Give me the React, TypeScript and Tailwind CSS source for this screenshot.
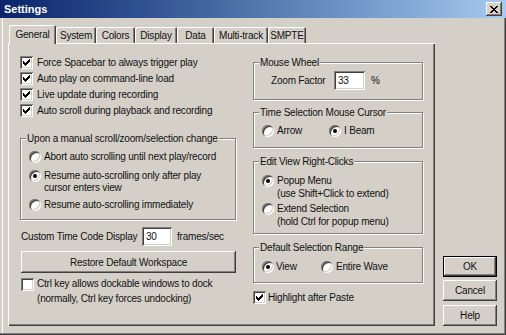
import React from "react";

const raised =
  "shadow-[inset_-1px_-1px_0_#404040,inset_1px_1px_0_#fff,inset_-2px_-2px_0_#808080]";
const sunken =
  "shadow-[inset_1px_1px_0_#808080,inset_-1px_-1px_0_#fff,inset_2px_2px_0_#404040,inset_-2px_-2px_0_#d4d0c8]";

function Check({ checked }: { checked?: boolean }) {
  return (
    <span
      className={`w-[13px] h-[13px] bg-white shrink-0 flex items-center justify-center ${sunken}`}
    >
      {checked && (
        <svg width="7" height="7" viewBox="0 0 7 7" shapeRendering="crispEdges">
          <path
            d="M0.5 2.5 L2.5 4.5 L6.5 0.5 M0.5 3.5 L2.5 5.5 L6.5 1.5 M0.5 4.5 L2.5 6.5 L6.5 2.5"
            stroke="#000"
            fill="none"
            strokeWidth="1"
          />
        </svg>
      )}
    </span>
  );
}

function Radio({ on }: { on?: boolean }) {
  return (
    <span
      className={`w-[12px] h-[12px] rounded-full bg-white shrink-0 flex items-center justify-center ${sunken}`}
    >
      {on && <span className="w-[4px] h-[4px] rounded-full bg-black" />}
    </span>
  );
}

function Group({
  title,
  className,
  children,
}: {
  title: string;
  className: string;
  children: React.ReactNode;
}) {
  return (
    <div
      className={`relative border border-[#808080] shadow-[inset_1px_1px_0_#fff,1px_1px_0_#fff] ${className}`}
    >
      <span className="absolute -top-[7px] left-[5px] px-[1px] bg-[#d4d0c8] leading-[13px] whitespace-nowrap">
        {title}
      </span>
      {children}
    </div>
  );
}

const tabs = [
  { label: "General", w: "w-[47px]" },
  { label: "System", w: "w-[40px]" },
  { label: "Colors", w: "w-[39px]" },
  { label: "Display", w: "w-[42px]" },
  { label: "Data", w: "w-[37px]" },
  { label: "Multi-track", w: "w-[54px]" },
  { label: "SMPTE", w: "w-[38px]" },
];

const topChecks = [
  "Force Spacebar to always trigger play",
  "Auto play on command-line load",
  "Live update during recording",
  "Auto scroll during playback and recording",
];

export default function App() {
  return (
    <div className="w-[506px] h-[335px] bg-[#d4d0c8] overflow-hidden flex flex-col font-['Liberation_Sans',Arial,sans-serif] text-[10px] tracking-[-0.2px] text-[#111] leading-[13px] shadow-[inset_-1px_-1px_0_#404040,inset_-2px_-2px_0_#808080,inset_2px_0_0_#d4d0c8,inset_3px_0_0_#fff]">
      {/* Title bar */}
      <div className="h-[18px] shrink-0 flex items-center bg-linear-to-r from-[#0a246a] to-[#a6caf0]">
        <span className="pl-[4px] text-white font-bold text-[11px] tracking-normal">Settings</span>
        <button
          className={`ml-auto mr-[4px] w-[16px] h-[14px] bg-[#d4d0c8] flex items-center justify-center ${raised}`}
        >
          <svg width="8" height="7" viewBox="0 0 8 7" shapeRendering="crispEdges">
            <path d="M0 0 L7 7 M1 0 L8 7 M7 0 L0 7 M8 0 L1 7" stroke="#000" strokeWidth="1" />
          </svg>
        </button>
      </div>

      <div className="flex pl-[8px]">
        {/* Tab control */}
        <div className="w-[427px] flex flex-col">
          <div className="h-[25px] flex items-end pl-[1px] pt-[7px]">
            {tabs.map((t, i) =>
              i === 0 ? (
                <div
                  key={t.label}
                  className={`${t.w} h-[19px] -mb-[1px] relative z-10 bg-[#d4d0c8] rounded-t-[2px] flex justify-center pt-[3px] shadow-[inset_1px_1px_0_#fff,inset_-1px_0_0_#404040,inset_-2px_0_0_#808080]`}
                >
                  {t.label}
                </div>
              ) : (
                <div
                  key={t.label}
                  className={`${t.w} h-[16px] rounded-t-[2px] flex justify-center pt-[2px] whitespace-nowrap shadow-[inset_1px_1px_0_#fff,inset_-1px_0_0_#404040,inset_-2px_0_0_#808080]`}
                >
                  {t.label}
                </div>
              )
            )}
          </div>

          <div className="h-[283px] flex pl-[12px] shadow-[inset_1px_1px_0_#fff,inset_-1px_-1px_0_#404040,inset_-2px_-2px_0_#808080]">
            {/* Left column */}
            <div className="w-[216px] flex flex-col pt-[11px]">
              {topChecks.map((c) => (
                <div key={c} className="h-[16px] flex items-center gap-[4px]">
                  <Check checked />
                  <span className="whitespace-nowrap">{c}</span>
                </div>
              ))}

              <Group title="Upon a manual scroll/zoom/selection change" className="mt-[20px] h-[82px] pl-[8px] pt-[12px] w-[216px]">
                <div className="flex gap-[3px] leading-[12px]">
                  <Radio />
                  <span>Abort auto scrolling until next play/record</span>
                </div>
                <div className="flex gap-[3px] leading-[12px] mt-[7px]">
                  <Radio on />
                  <span>
                    Resume auto-scrolling only after play
                    <br />
                    cursor enters view
                  </span>
                </div>
                <div className="flex gap-[3px] leading-[12px] mt-[5px]">
                  <Radio />
                  <span>Resume auto-scrolling immediately</span>
                </div>
              </Group>

              <div className="mt-[7px] flex items-center pl-[1px] h-[19px]">
                <span className="w-[121px] whitespace-nowrap">Custom Time Code Display</span>
                <span className={`w-[30px] h-[19px] bg-white pl-[4px] flex items-center ${sunken}`}>30</span>
                <span className="ml-[5px]">frames/sec</span>
              </div>

              <button
                className={`mt-[5px] ml-[1px] w-[215px] h-[22px] bg-[#d4d0c8] flex items-center justify-center ${raised}`}
              >
                Restore Default Workspace
              </button>

              <div className="mt-[3px] ml-[1px] flex gap-[3px]">
                <span className="mt-[2px]">
                  <Check />
                </span>
                <span className="leading-[15px]">
                  Ctrl key allows dockable windows to dock
                  <br />
                  (normally, Ctrl key forces undocking)
                </span>
              </div>
            </div>

            {/* Right column */}
            <div className="ml-[17px] w-[170px] flex flex-col pt-[19px]">
              <Group title="Mouse Wheel" className="h-[38px] pl-[17px] pt-[8px]">
                <div className="flex items-center h-[19px]">
                  <span className="w-[63px]">Zoom Factor</span>
                  <span className={`w-[31px] h-[19px] bg-white pl-[4px] flex items-center ${sunken}`}>33</span>
                  <span className="ml-[6px]">%</span>
                </div>
              </Group>

              <Group title="Time Selection Mouse Cursor" className="mt-[12px] h-[36px] pl-[8px] pt-[11px]">
                <div className="flex items-center">
                  <div className="w-[67px] flex items-center gap-[3px]">
                    <Radio />
                    <span>Arrow</span>
                  </div>
                  <div className="flex items-center gap-[3px]">
                    <Radio on />
                    <span>I Beam</span>
                  </div>
                </div>
              </Group>

              <Group title="Edit View Right-Clicks" className="mt-[13px] h-[73px] pl-[8px] pt-[12px]">
                <div className="flex gap-[3px]">
                  <span className="mt-[1px]">
                    <Radio on />
                  </span>
                  <span>
                    Popup Menu
                    <br />
                    (use Shift+Click to extend)
                  </span>
                </div>
                <div className="flex gap-[3px] mt-[2px]">
                  <span className="mt-[1px]">
                    <Radio />
                  </span>
                  <span>
                    Extend Selection
                    <br />
                    (hold Ctrl for popup menu)
                  </span>
                </div>
              </Group>

              <Group title="Default Selection Range" className="mt-[13px] h-[36px] pl-[8px] pt-[12px]">
                <div className="flex items-center">
                  <div className="w-[59px] flex items-center gap-[2px]">
                    <Radio on />
                    <span>View</span>
                  </div>
                  <div className="flex items-center gap-[3px]">
                    <Radio />
                    <span>Entire Wave</span>
                  </div>
                </div>
              </Group>

              <div className="mt-[8px] flex items-center gap-[2px]">
                <Check checked />
                <span>Highlight after Paste</span>
              </div>
            </div>
          </div>
        </div>

        {/* Dialog buttons */}
        <div className="ml-[8px] w-[54px] flex flex-col pt-[238px]">
          <button className={`h-[21px] border border-black bg-[#d4d0c8] flex items-center justify-center ${raised}`}>
            OK
          </button>
          <button className={`mt-[3px] h-[21px] bg-[#d4d0c8] flex items-center justify-center ${raised}`}>
            Cancel
          </button>
          <button className={`mt-[4px] h-[21px] bg-[#d4d0c8] flex items-center justify-center ${raised}`}>
            Help
          </button>
        </div>
      </div>
    </div>
  );
}
